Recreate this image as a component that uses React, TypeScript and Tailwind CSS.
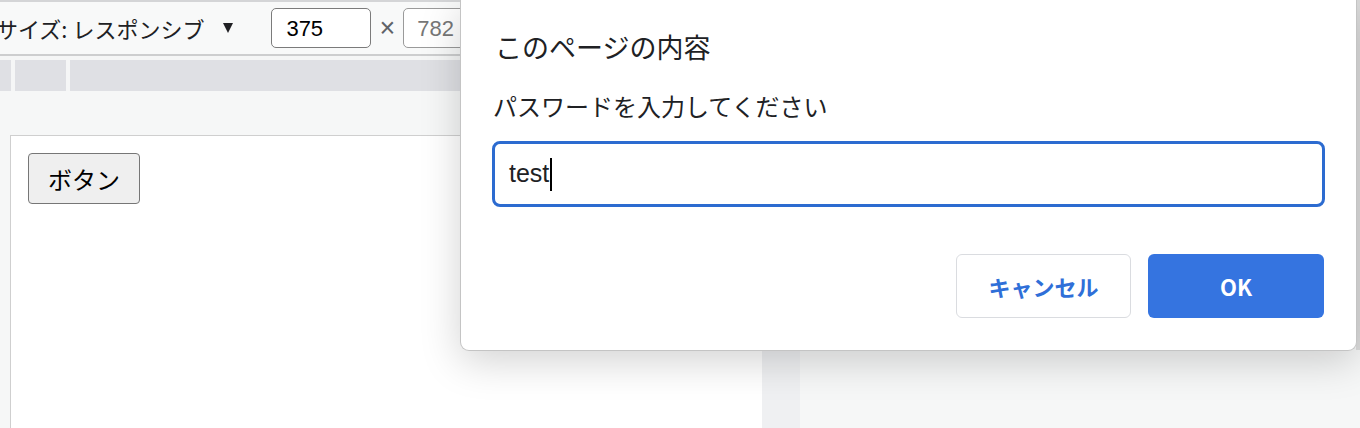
import React, { FC } from "react";

const JP = "font-['Noto_Sans_CJK_JP','Noto_Sans',sans-serif]";

/**
 * Background: device toolbar, ruler and the emulated page
 */
const DevicePage: FC = () => {
  return (
    <div className="flex h-[428px] flex-col bg-[#f6f7f7]">
      {/* Device toolbar */}
      <div className="h-[2px] bg-[#d4d5d7]" />
      <div className="flex h-[52px] items-center bg-[#f8f9f9]">
        <span className={`ml-[-4px] whitespace-nowrap text-[22px] text-[#202124] ${JP}`}>
          サイズ: レスポンシブ
        </span>
        {/* dropdown caret */}
        <span className="ml-[19px] h-0 w-0 border-x-[5px] border-t-[10px] border-x-transparent border-t-[#202124]" />
        <div className="ml-[38px] flex h-[40px] w-[100px] shrink-0 items-center rounded-[5px] border-[1.5px] border-[#7b7b7b] bg-white pl-[14px] font-['Liberation_Sans',sans-serif] text-[22px] text-black">
          375
        </div>
        <span className="mx-[8px] font-['Liberation_Sans',sans-serif] text-[27px] text-[#5f6368]">
          ×
        </span>
        <div className="flex h-[40px] w-[100px] shrink-0 items-center rounded-[5px] border-[1.5px] border-[#9a9a9a] bg-white pl-[13px] font-['Liberation_Sans',sans-serif] text-[22px] text-[#777]">
          782
        </div>
      </div>
      <div className="h-[2px] bg-[#cdcecf]" />
      <div className="h-[4px] bg-[#f5f6f6]" />

      {/* Ruler */}
      <div className="flex h-[31px] bg-[#dfe0e4]">
        <div className="ml-[11px] w-[4px] bg-[#f5f6f6]" />
        <div className="ml-[51px] w-[4px] bg-[#f5f6f6]" />
      </div>

      {/* Emulated viewport */}
      <div className="flex flex-1 pt-[44px]">
        <div className="ml-[10px] w-[752px] border-l border-t border-[#cfcfcf] bg-white pl-[17px] pt-[17px]">
          <button
            className={`h-[51px] w-[112px] rounded-[4px] border-[1.5px] border-[#767676] bg-[#efefef] text-[24px] text-black ${JP}`}
          >
            ボタン
          </button>
        </div>
        <div className="mt-[-44px] w-[38px] bg-[#eff0f2]" />
      </div>
    </div>
  );
};

/**
 * Browser prompt dialog
 */
const PromptDialog: FC = () => {
  return (
    <div
      className={`absolute left-[460px] top-0 h-[351px] w-[897px] rounded-b-[9px] border-x border-b border-[#c4c4c4] bg-white px-[31px] shadow-[0_10px_40px_rgba(0,0,0,0.18)] ${JP}`}
    >
      <h2 className="pl-[3px] pt-[27px] text-[27px] leading-[40px] text-[#202124]">
        このページの内容
      </h2>
      <p className="pl-[1px] pt-[19px] text-[24px] leading-[40px] text-[#202124]">
        パスワードを入力してください
      </p>
      <div className="mt-[15px] flex h-[66px] items-center rounded-[8px] border-[3px] border-[#2c6bd0] pl-[14px]">
        <span className="font-['Liberation_Sans','Noto_Sans_CJK_JP',sans-serif] text-[25px] text-[#202124]">
          test
        </span>
        <span className="ml-[1px] h-[33px] w-[2px] bg-black" />
      </div>
      <div className="mt-[47px] flex justify-end gap-[17px] pr-[1px]">
        <button className="h-[64px] w-[175px] rounded-[6px] border border-[#dadce0] bg-white text-[22px] font-bold text-[#2f6fd8]">
          キャンセル
        </button>
        <button className="h-[64px] w-[176px] rounded-[6px] bg-[#3574e0] text-[22px] font-bold text-white">
          OK
        </button>
      </div>
    </div>
  );
};

const App: FC = () => {
  return (
    <div className="relative h-[428px] w-[1360px] overflow-hidden">
      <DevicePage />
      <div className="absolute right-0 top-0 h-[350px] w-[4px] bg-[#dcdcdc]" />
      <PromptDialog />
    </div>
  );
};

export default App;
